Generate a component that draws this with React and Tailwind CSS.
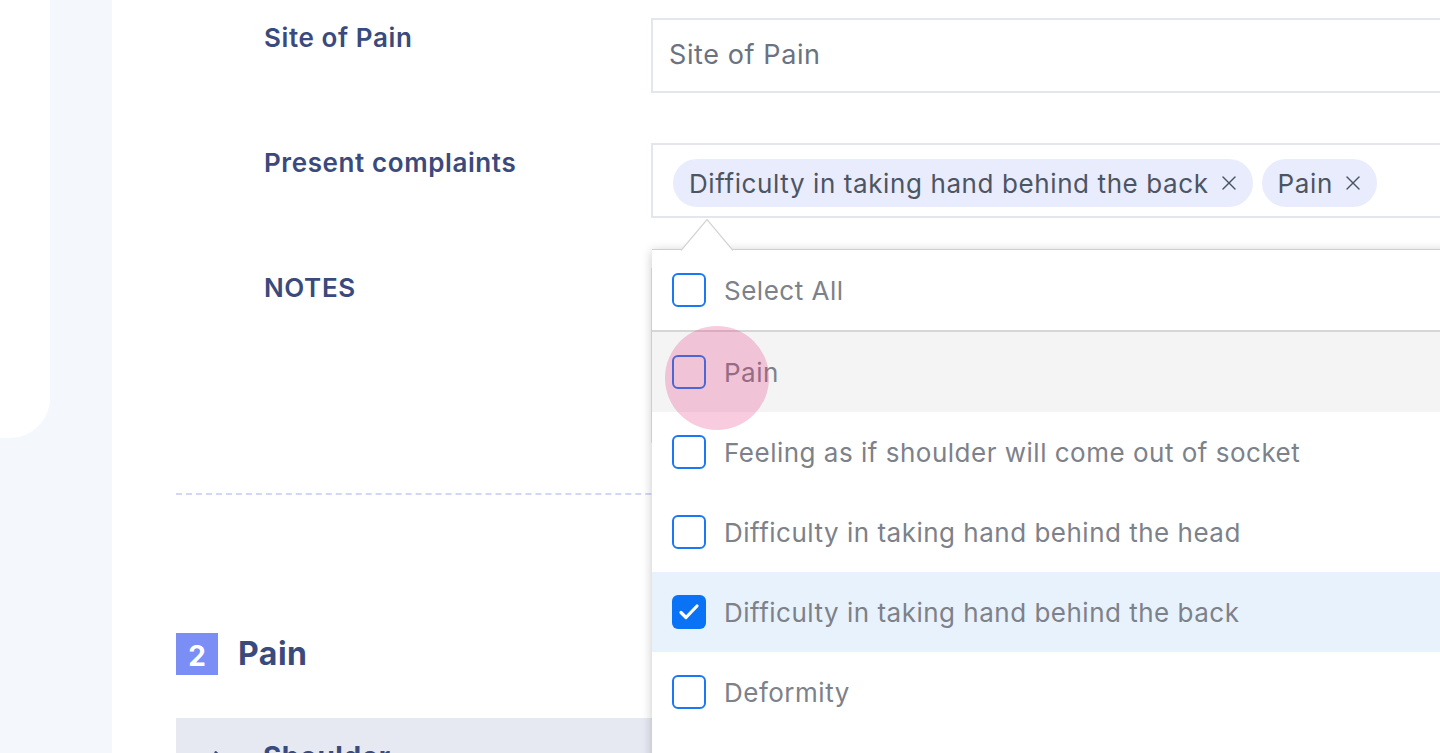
import React from "react";
import { X, ChevronRight } from "lucide-react";

const options = [
  { label: "Pain", checked: false, hover: true },
  { label: "Feeling as if shoulder will come out of socket", checked: false },
  { label: "Difficulty in taking hand behind the head", checked: false },
  { label: "Difficulty in taking hand behind the back", checked: true },
  { label: "Deformity", checked: false },
];

const Checkbox = ({ checked }) =>
  checked ? (
    <span className="w-[34px] h-[34px] rounded-[6px] bg-[#0a72f5] flex items-center justify-center shrink-0">
      <svg width="24" height="24" viewBox="0 0 24 24" fill="none">
        <path d="M4 12.5l5 5L20 6" stroke="white" strokeWidth="3.2" strokeLinecap="round" strokeLinejoin="round" />
      </svg>
    </span>
  ) : (
    <span className="w-[34px] h-[34px] rounded-[6px] border-2 border-[#1a78f2] shrink-0"></span>
  );

const Chip = ({ children }) => (
  <span className="h-[48px] flex items-center gap-[8px] pl-[16px] pr-[12px] rounded-full bg-[#e9ecfd] text-[#4b5563] text-[26px] tracking-[0.6px] whitespace-nowrap">
    {children}
    <X size={24} strokeWidth={1.4} className="text-[#4b5563]" />
  </span>
);

const Dropdown = () => (
  <div className="absolute left-[1px] top-[106px] w-[900px] bg-white border-t border-[#cfcfcf] shadow-[0_2px_10px_rgba(0,0,0,0.22)] z-10">
    <svg className="absolute left-[29px] top-[-31px]" width="52" height="32" viewBox="0 0 52 32">
      <path d="M0 31.5 L26 0.5 L52 31.5" fill="white" stroke="#d4d4d4" strokeWidth="1.2" />
    </svg>
    <div className="h-[82px] flex items-center gap-[18px] pl-[20px] border-b-2 border-[#d6d6d6] text-[26px] tracking-[0.5px] text-[#7d8189]">
      <Checkbox />
      <span>Select All</span>
    </div>
    {options.map((o) => (
      <div
        key={o.label}
        className={
          "h-[80px] flex items-center gap-[18px] pl-[20px] text-[26px] tracking-[0.5px] text-[#7d8189] " +
          (o.hover ? "bg-[#f4f4f4]" : o.checked ? "bg-[#e8f2fd]" : "bg-white")
        }
      >
        <Checkbox checked={o.checked} />
        <span className="whitespace-nowrap">{o.label}</span>
      </div>
    ))}
    <div className="h-[60px]"></div>
    <span className="absolute left-[13px] top-[76px] w-[104px] h-[104px] rounded-full bg-[#e2307a]/25 pointer-events-none"></span>
  </div>
);

const labelClass =
  "w-[475px] shrink-0 pl-[88px] pt-[4px] text-[26px] leading-[32px] tracking-[0.6px] font-semibold text-[#3b4a7c]";

export default function App() {
  return (
    <div
      className="w-[1440px] h-[753px] overflow-hidden flex bg-[#f4f8fd]"
      style={{ fontFamily: "Inter, 'Noto Sans', sans-serif" }}
    >
      <div className="w-[50px] shrink-0">
        <div className="h-[438px] bg-white rounded-br-[40px]"></div>
      </div>
      <div className="w-[62px] shrink-0"></div>
      <main className="flex-1 bg-white pl-[64px] pt-[18px] min-w-0">
        <div className="flex">
          <div className={labelClass}>Site of Pain</div>
          <div className="w-[900px] shrink-0 h-[75px] border-2 border-[#e3e6ed] flex items-center pl-[16px] text-[27px] tracking-[0.6px] text-[#6b7280]">
            Site of Pain
          </div>
        </div>

        <div className="flex mt-[50px]">
          <div className={labelClass}>Present complaints</div>
          <div className="relative w-[900px] shrink-0">
            <div className="h-[75px] border-2 border-[#e3e6ed] flex items-start gap-[9px] pl-[20px] pt-[14px]">
              <Chip>Difficulty in taking hand behind the back</Chip>
              <Chip>Pain</Chip>
            </div>
            <Dropdown />
          </div>
        </div>

        <div className="flex mt-[50px]">
          <div className={labelClass}>NOTES</div>
          <div className="w-[900px] shrink-0 h-[175px] border-2 border-[#e3e6ed]"></div>
        </div>

        <div className="mt-[50px] border-t-2 border-dashed border-[#d3d6f6]"></div>

        <div className="mt-[138px] h-[42px] flex items-center gap-[20px]">
          <span className="w-[42px] h-[42px] bg-[#7b8ef6] text-white text-[28px] font-bold flex items-center justify-center pt-[4px]">
            2
          </span>
          <span className="text-[32px] leading-[42px] tracking-[0.5px] font-bold text-[#3b4a7c]">Pain</span>
        </div>

        <div className="mt-[43px] h-[80px] bg-[#e6e9f2] flex items-start pt-[18px] pl-[30px] gap-[31px]">
          <ChevronRight size={26} strokeWidth={2.5} className="text-[#3b4a7c] mt-[10px]" />
          <span className="text-[28px] font-bold tracking-[0.5px] text-[#3b4a7c]">Shoulder</span>
        </div>
      </main>
    </div>
  );
}
